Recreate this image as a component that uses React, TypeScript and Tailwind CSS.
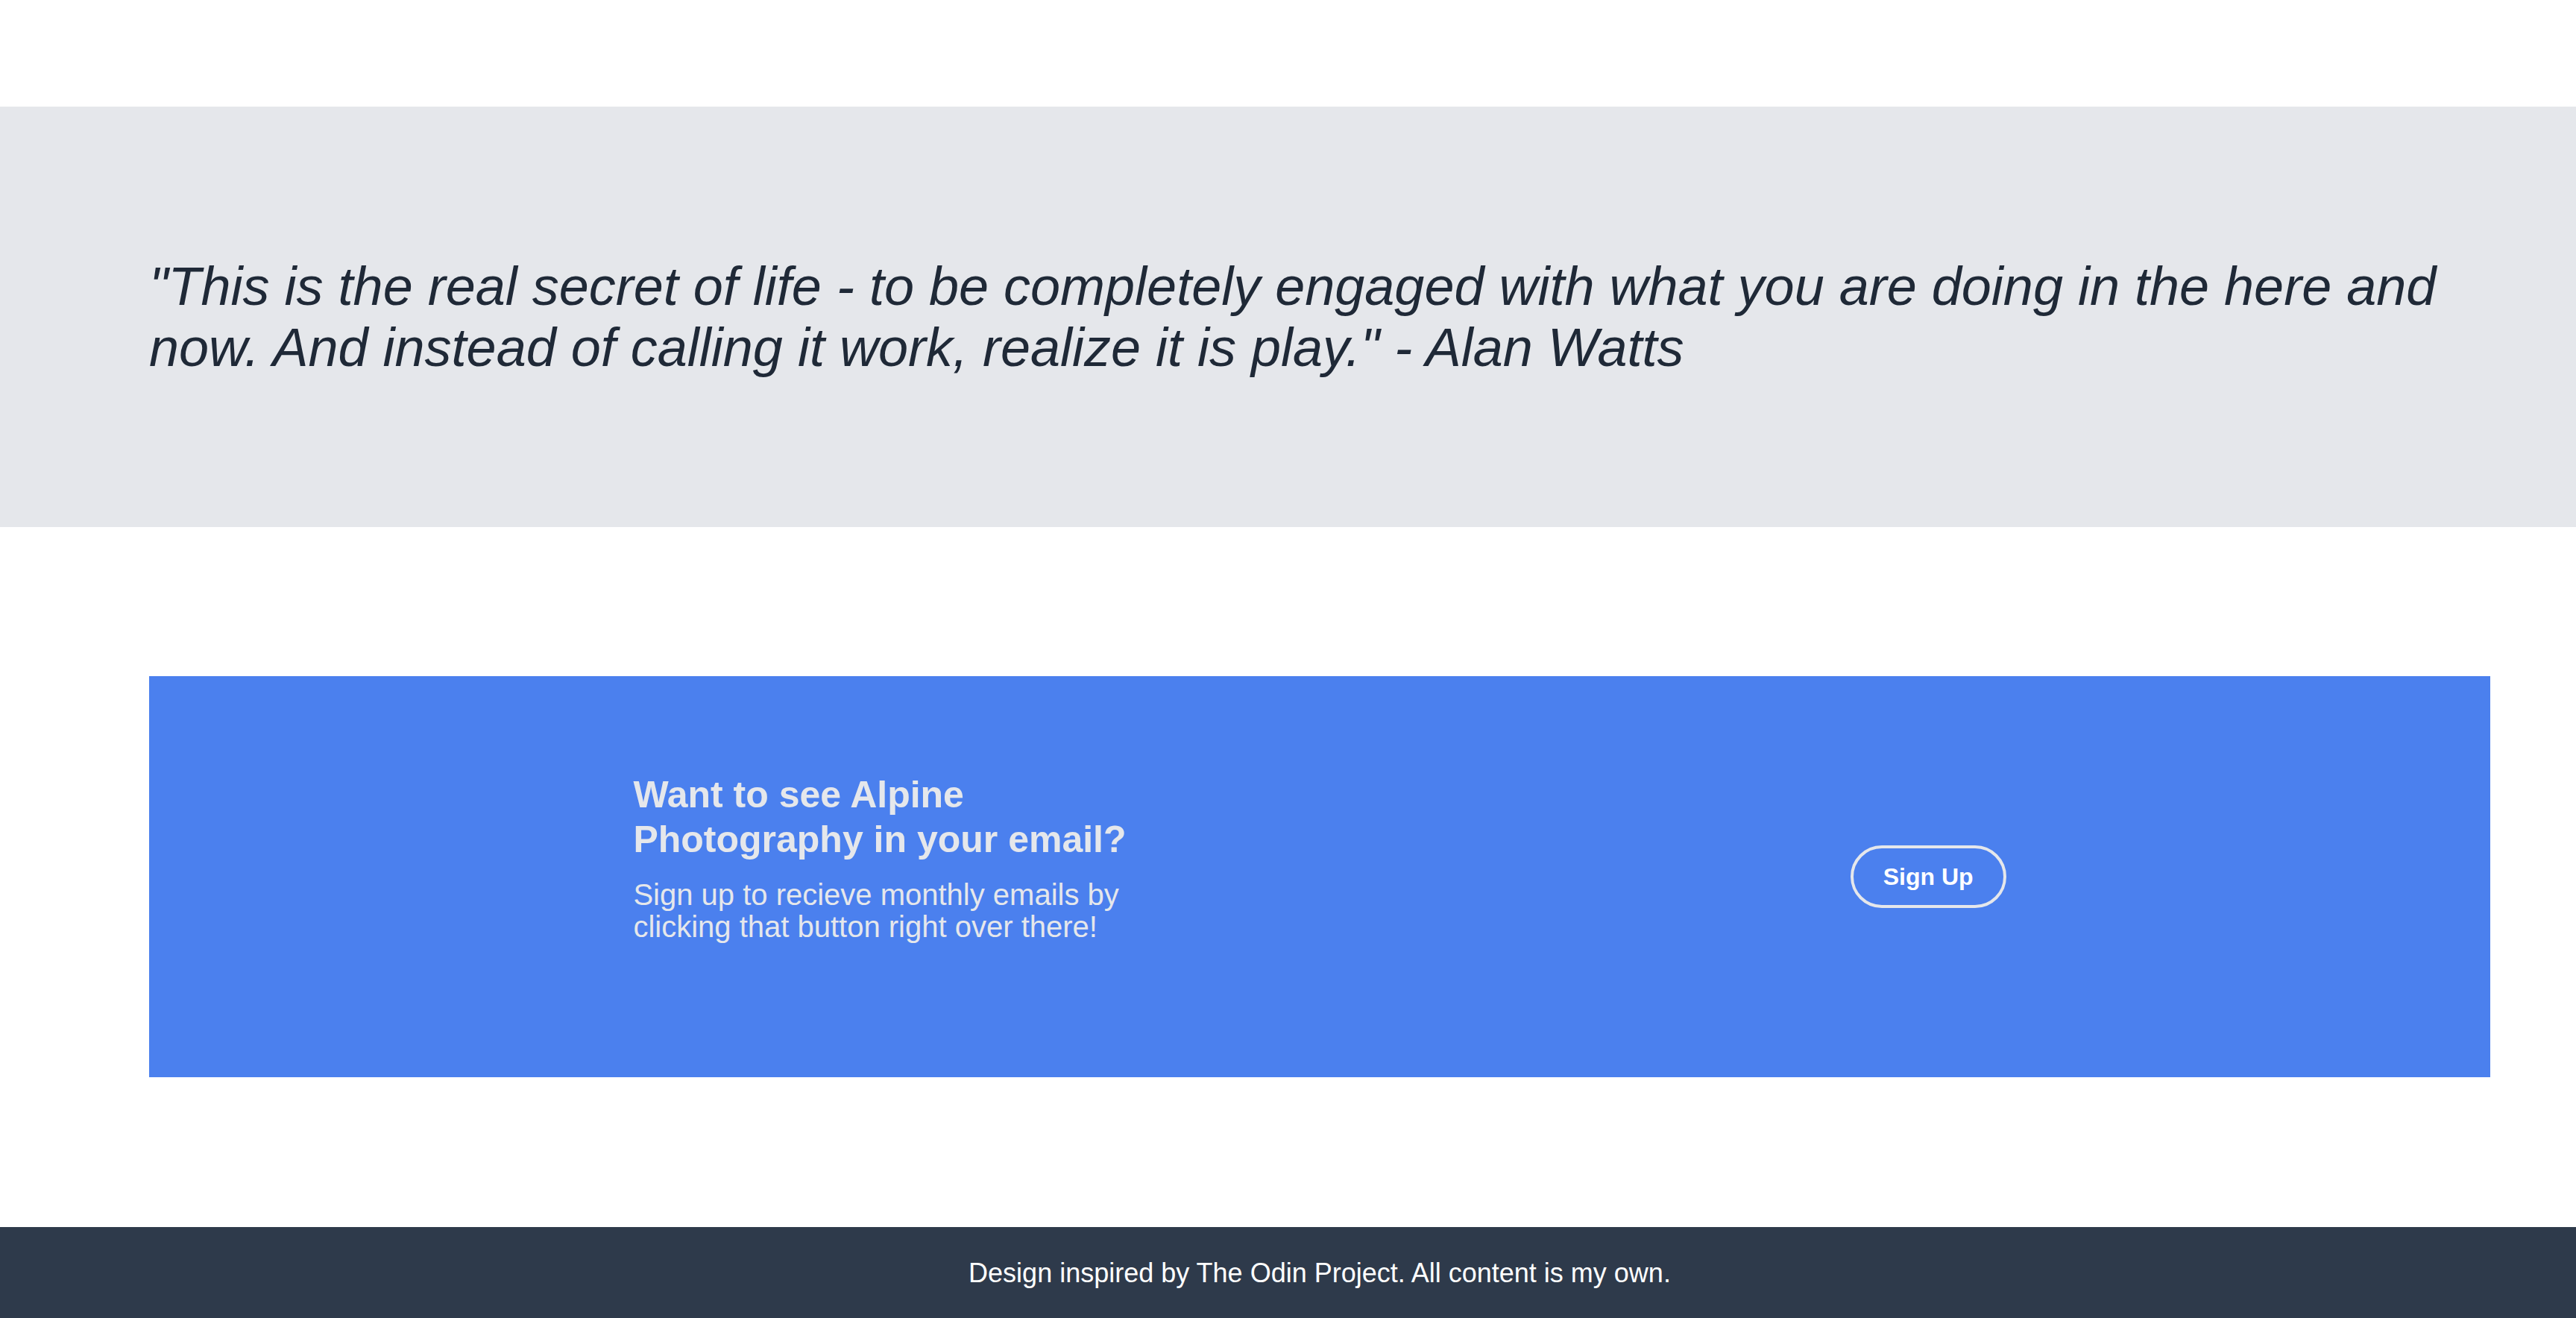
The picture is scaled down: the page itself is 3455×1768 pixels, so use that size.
import React from "react";

const font = "font-['Liberation_Sans',Arial,sans-serif]";

const Quote = () => {
  return (
    <section className="flex h-[564px] items-center bg-[#e5e7eb] px-[200px]">
      <p className="text-[72px] leading-[82px] italic text-[#1f2937]">
        "This is the real secret of life - to be completely engaged with what you are doing in the here and
        now. And instead of calling it work, realize it is play." - Alan Watts
      </p>
    </section>
  );
};

const SignUpBanner = () => {
  return (
    <section className="px-[200px] pt-[200px] pb-[201px]">
      <div className="flex h-[538px] items-center justify-evenly bg-[#4b80ee]">
        <div className="w-[983px] pb-[52px] text-[#e5e7eb]">
          <h2 className="mb-[23px] max-w-[690px] text-[50px] font-bold leading-[60px]">
            Want to see Alpine Photography in your email?
          </h2>
          <p className="max-w-[690px] text-[40px] leading-[43px]">
            Sign up to recieve monthly emails by clicking that button right over there!
          </p>
        </div>
        <button
          type="button"
          className="rounded-full border-4 border-[#e5e7eb] px-[40px] py-[20px] text-[32px] font-bold leading-[36px] text-white"
        >
          Sign Up
        </button>
      </div>
    </section>
  );
};

const Footer = () => {
  return (
    <footer className="flex h-[122px] items-center justify-center bg-[#2e3a4b] text-[36px] leading-[41px] text-white">
      Design inspired by The Odin Project. All content is my own.
    </footer>
  );
};

export default function App() {
  return (
    <div className={`w-full overflow-hidden bg-white ${font}`}>
      <div className="w-[3540px] pt-[143px]">
        <Quote />
        <SignUpBanner />
        <Footer />
      </div>
    </div>
  );
}
